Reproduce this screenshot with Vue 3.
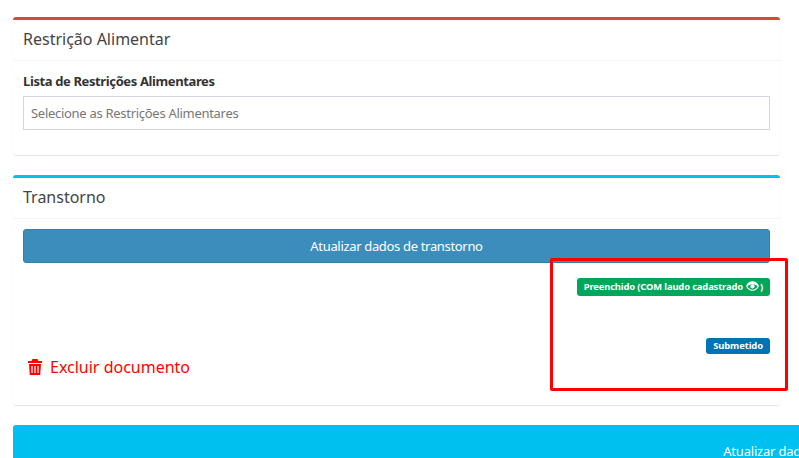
<template>
  <div class="page">
    <section class="card red">
      <header class="head"><h3>Restrição Alimentar</h3></header>
      <div class="body first">
        <label class="label">Lista de Restrições Alimentares</label>
        <div class="select">Selecione as Restrições Alimentares</div>
      </div>
    </section>
    <section class="card blue">
      <header class="head"><h3>Transtorno</h3></header>
      <div class="body second">
        <button class="update">Atualizar dados de transtorno</button>
        <div class="status">
          <div class="delete">
            <svg class="trash" viewBox="0 0 14 16" width="14" height="16">
              <path fill="#f00" fill-rule="evenodd" d="M4.500 0h5l1 2H14v2H0V2h3.500zM1 5h12l-.8 11H1.800zm2.400 2v7h1.200V7zm3 0v7h1.200V7zm3 0v7h1.200V7z" />
            </svg>
            <span>Excluir documento</span>
          </div>
          <div class="badges">
            <span class="badge green">
              <span>Preenchido (COM laudo cadastrado</span>
              <svg class="eye" viewBox="0 0 16 12" width="13" height="10">
                <path fill="#fff" fill-rule="evenodd" d="M8 0c3.600 0 6.500 2.300 8 6-1.500 3.700-4.400 6-8 6S1.500 9.700 0 6C1.500 2.300 4.400 0 8 0zM1.700 6.200C3 8.900 5.300 10.600 8 10.600s5-1.700 6.300-4.400C13 5 10.700 4.300 8 4.300S3 5 1.700 6.200z" />
                <circle cx="8" cy="6.500" r="2.600" fill="#fff" />
              </svg>
              <span>)</span>
            </span>
            <span class="badge navy">Submetido</span>
          </div>
        </div>
      </div>
    </section>
    <button class="save">Atualizar dados</button>
    <div class="highlight"></div>
  </div>
</template>

<script setup>
</script>

<style>
html, body { margin: 0; background: #fff; overflow: hidden; }
</style>

<style scoped>
.page {
  position: relative;
  width: 799px;
  height: 458px;
  overflow: hidden;
  box-sizing: border-box;
  padding: 17px 19px 0 13px;
  font-family: "Noto Sans", sans-serif;
  color: #333;
  background: #fff;
}
.card {
  background: #fff;
  border-top: 3px solid #d9493a;
  border-radius: 3px;
  box-shadow: 0 1px 1px rgba(0, 0, 0, 0.1);
}
.card.blue { border-top-color: #00c0ef; margin-top: 20px; }
.head {
  height: 41px;
  box-sizing: border-box;
  padding: 8px 10px 0;
  border-bottom: 1px solid #f4f4f4;
}
h3 {
  margin: 0;
  font-size: 16px;
  line-height: 22px;
  font-weight: 400;
  color: #444;
  letter-spacing: 0;
}
.body { padding: 10px; }
.first { height: 94px; box-sizing: border-box; }
.label {
  display: block;
  font-size: 13px;
  line-height: 20px;
  font-weight: 700;
  letter-spacing: -0.38px;
  color: #333;
}
.select {
  margin-top: 5px;
  height: 34px;
  box-sizing: border-box;
  border: 1px solid #d2d6de;
  padding: 0 7px;
  font-size: 13px;
  line-height: 32px;
  letter-spacing: -0.29px;
  color: #777;
}
.update {
  display: block;
  width: 100%;
  height: 34px;
  border: 1px solid #367fa9;
  border-radius: 3px;
  background: #3c8dbc;
  color: #fff;
  font: 400 13px/20px "Noto Sans", sans-serif;
  letter-spacing: -0.33px;
}
.status {
  display: flex;
  justify-content: space-between;
  height: 132px;
  box-sizing: border-box;
}
.delete {
  display: flex;
  align-items: center;
  gap: 8px;
  align-self: flex-end;
  margin: 0 0 17px 5px;
  color: #f00;
  font-size: 16px;
  line-height: 22px;
  letter-spacing: 0;
}
.badges {
  display: flex;
  flex-direction: column;
  align-items: flex-end;
  padding-top: 15px;
  gap: 42px;
}
.badge {
  display: inline-flex;
  align-items: center;
  box-sizing: border-box;
  color: #fff;
  font-size: 9.4px;
  font-weight: 700;
  border-radius: 3px;
  white-space: nowrap;
  letter-spacing: -0.08px;
  padding-bottom: 2px;
}
.eye { margin: 0 1px 0 3px; }
.green { background: #00a65a; height: 18px; padding-left: 7px; padding-right: 7px; letter-spacing: -0.14px; }
.navy { background: #0073b7; height: 16px; padding-left: 7px; padding-right: 7px; }
.save {
  display: block;
  position: relative;
  margin-top: 20px;
  width: 1512px;
  height: 52px;
  border: 0;
  border-radius: 3px;
  background: #00c0ef;
  color: #fff;
  padding: 0;
  font: 400 13px/20px "Noto Sans", sans-serif;
  letter-spacing: -0.2px;
}
.highlight {
  position: absolute;
  left: 550px;
  top: 258px;
  width: 238px;
  height: 133px;
  box-sizing: border-box;
  border: 3px solid #f00;
  border-radius: 2px;
  pointer-events: none;
}
</style>
